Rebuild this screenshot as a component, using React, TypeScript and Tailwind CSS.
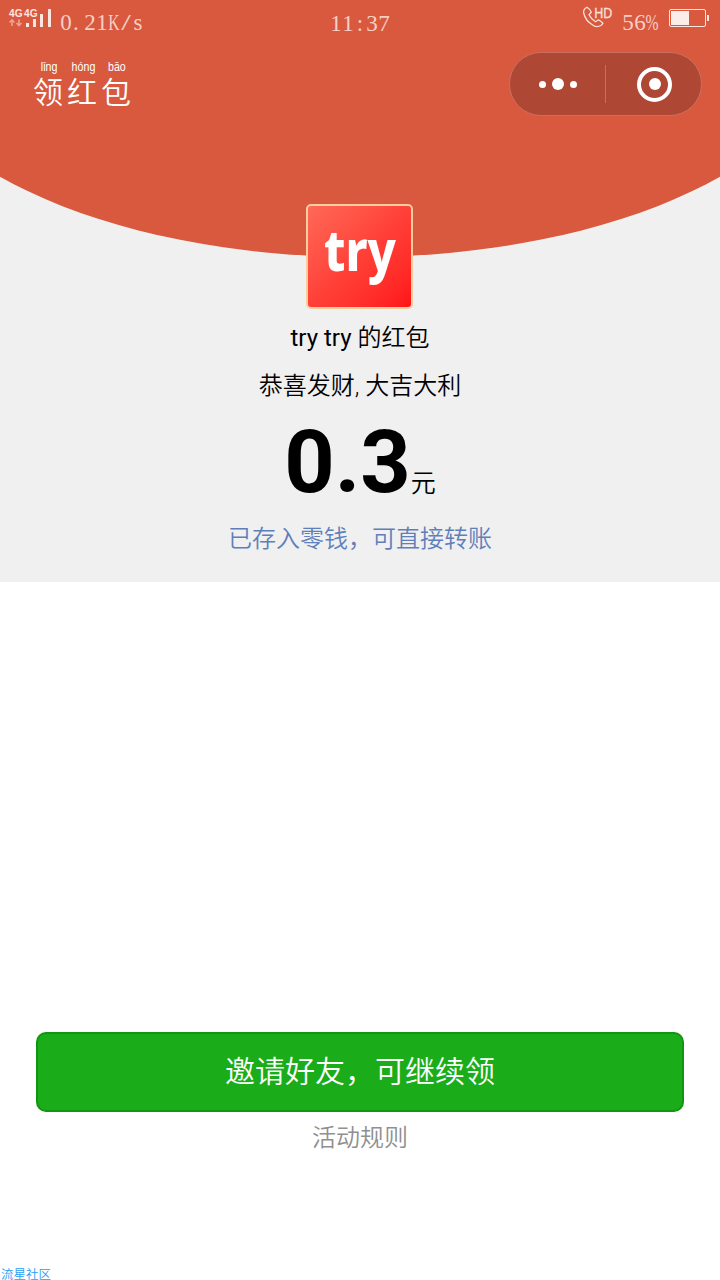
import React from "react";

const cjk = "font-[Roboto,'Noto_Sans_CJK_SC',sans-serif]";

function Cells({ text }: { text: string }) {
  return (
    <span className="flex font-['Liberation_Serif',serif] text-[23px] leading-6 text-[#f7cfc6]">
      {text.split("").map((c, i) => (
        <span
          key={i}
          className={
            "flex w-3 " +
            (c === "." ? "justify-start pl-px" : "justify-center") +
            (c === "K" || c === "%" ? " scale-x-[0.68]" : "") +
            (c === "/" ? " scale-x-150" : "")
          }
        >
          {c}
        </span>
      ))}
    </span>
  );
}

function Signal() {
  return (
    <svg className="mt-[8px] ml-[8px] h-5 w-11 shrink-0" viewBox="0 0 44 20">
      <text x="1" y="9" fontFamily="Liberation Sans" fontWeight="700" fontSize="10" textLength="13.5" lengthAdjust="spacingAndGlyphs" fill="#fbe6e1">4G</text>
      <text x="16" y="9" fontFamily="Liberation Sans" fontWeight="700" fontSize="10" textLength="13.5" lengthAdjust="spacingAndGlyphs" fill="#fbe6e1">4G</text>
      <path d="M4 18v-6M1.500 14.500L4 12l2.500 2.500M11 11.500v6M8.500 15L11 17.500l2.500-2.500" stroke="#eda292" strokeWidth="1.6" fill="none" />
      <path d="M18 15h3v4h-3zM25 11h3v8h-3zM32 6h3v13h-3zM40 1h3v18h-3z" fill="#fbe6e1" />
    </svg>
  );
}

function StatusBar() {
  return (
    <div className="flex h-[42px]">
      <div className="flex w-[330px]">
        <Signal />
        <div className="mt-[11px] ml-[8px]"><Cells text="0.21K/s" /></div>
      </div>
      <div className="mt-[12px] w-[252px]"><Cells text="11:37" /></div>
      <svg className="mt-[5px] h-6 w-8 shrink-0" viewBox="0 0 32 24">
        <path d="M5 2.300Q1 4.500 1.700 8Q3.500 16 11 20.200Q15 23 19.300 20.300L21 18.200Q18 15.300 16.500 14.800L13.500 16.800Q9 14 7 9.800L9.300 7.200Q8.500 4.500 5 2.300Z" fill="none" stroke="#fae0d9" strokeWidth="1.300" strokeLinejoin="round" />
        <text x="12.300" y="12.500" fontFamily="Liberation Sans" fontSize="14.500" textLength="18" lengthAdjust="spacingAndGlyphs" fill="#fae0d9" stroke="#fae0d9" strokeWidth="0.3">HD</text>
      </svg>
      <div className="mt-[11px] ml-[8px]"><Cells text="56%" /></div>
      <div className="mt-[9px] ml-[11px] flex h-[18px] items-center">
        <div className="h-[18px] w-[37px] rounded-[2px] border border-[#fbe6e1] p-px">
          <div className="h-[14px] w-[18px] bg-[#fbeeea]" />
        </div>
        <div className="ml-px h-[6px] w-[2px] bg-[#fbe6e1]" />
      </div>
    </div>
  );
}

function NavBar() {
  const title = [
    ["lǐng", "领"],
    ["hóng", "红"],
    ["bāo", "包"],
  ];
  return (
    <div className="flex justify-between pt-[10px] pr-[18px] pl-[32px] text-white">
      <div className="flex pt-[7px]">
        {title.map(([p, h]) => (
          <div key={h} className="flex w-[34px] flex-col items-center">
            <span className="scale-x-[0.82] font-['Liberation_Sans',sans-serif] text-[13px] leading-[15px]">{p}</span>
            <span className="-ml-0.5 font-['Noto_Sans_CJK_SC',sans-serif] text-[30px] leading-[32px] font-[350]">{h}</span>
          </div>
        ))}
      </div>
      <div className="flex h-16 w-[193px] items-center rounded-full border border-[#c87060] bg-[#ae4734]">
        <div className="flex w-[95px] items-center justify-center gap-[6px]">
          <i className="size-[7px] rounded-full bg-white" />
          <i className="size-3 rounded-full bg-white" />
          <i className="size-[7px] rounded-full bg-white" />
        </div>
        <div className="h-[38px] w-px bg-[#c87060]" />
        <div className="flex flex-1 justify-center pl-[2px]">
          <div className="flex size-[35px] items-center justify-center rounded-full border-4 border-white">
            <i className="size-3 rounded-full bg-white" />
          </div>
        </div>
      </div>
    </div>
  );
}

export default function App() {
  return (
    <div className={"flex h-[1280px] w-[720px] flex-col overflow-hidden bg-white " + cjk}>
      <section className="relative isolate flex h-[582px] flex-col bg-[#f0f0f0]">
        <svg className="absolute inset-x-0 top-0 -z-10 h-[260px] w-[720px]" viewBox="0 0 720 260">
          <rect width="720" height="40" fill="#d9593f" />
          <ellipse cx="360" cy="32" rx="470" ry="225" fill="#d9593f" />
        </svg>
        <StatusBar />
        <NavBar />
        <div className="mt-[88px] flex flex-col items-center">
          <div className="mr-px flex h-[105px] w-[107px] justify-center rounded-[5px] border-2 border-[#fbcf9d] bg-linear-to-br from-[#ff6857] via-[#ff4038] to-[#ff1218]">
            <svg className="h-full w-full" viewBox="0 0 103 101">
              <g transform="translate(0 65) scale(1 1.13)">
                <text x="16" y="0" fontFamily="Noto Sans" fontWeight="800" fontSize="50" textLength="72" lengthAdjust="spacingAndGlyphs" fill="#fff">try</text>
              </g>
            </svg>
          </div>
          <p className="mt-[11px] text-[24px] leading-9 font-[350]"><span className="font-normal">try try </span>的红包</p>
          <p className="mt-3 text-[24px] leading-9 font-[350]">恭喜发财, 大吉大利</p>
          <p className="mt-[6px] flex h-[104px] items-baseline leading-[104px] font-[350]">
            <span className="text-[88px] font-bold">0.3</span>
            <span className="text-[25px]">元</span>
          </p>
          <p className="mt-[7px] text-[24px] leading-9 font-[350] text-[#5f7fbb]">已存入零钱，可直接转账</p>
        </div>
      </section>
      <section className="flex flex-1 flex-col items-center px-9 pt-[450px]">
        <button className="h-20 w-full rounded-[10px] border-2 border-[#109611] bg-[#1aad19] pb-0.5 text-[30px] font-[350] text-white">
          邀请好友，可继续领
        </button>
        <a className="mt-2 text-[24px] leading-9 font-[350] text-[#909090]">活动规则</a>
      </section>
      <footer className="h-[14px] pl-px font-['Noto_Sans_CJK_SC',sans-serif] text-[12.5px] leading-[16px] font-[350] text-[#279df5]">流星社区</footer>
    </div>
  );
}
